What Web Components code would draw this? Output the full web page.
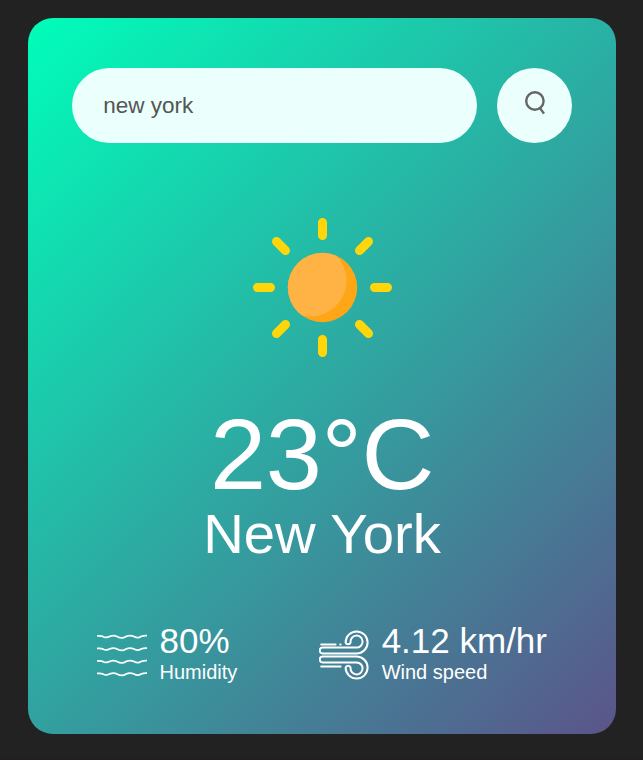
<!DOCTYPE html>
<html lang="en">
<head>
<meta charset="utf-8">
<title>Weather</title>
<style>
html{background:#222}
body{margin:0;height:760px;overflow:hidden;background:linear-gradient(#222 757px,#231e20 757px);font-family:"Liberation Sans",Arial,sans-serif;font-size:20px;color:#fff}
</style>
</head>
<body>
<weather-card>
  <search-bar slot="search" value="new york"></search-bar>
  <sun-icon></sun-icon>
  <span slot="temp">23°C</span>
  <span slot="city">New York</span>
  <weather-stat slot="stat" label="Humidity">
    <wave-icon slot="icon"></wave-icon>80%
  </weather-stat>
  <weather-stat slot="stat" label="Wind speed">
    <wind-icon slot="icon"></wind-icon>4.12 km/hr
  </weather-stat>
</weather-card>
<script>
function define(name, html) {
  customElements.define(name, class extends HTMLElement {
    constructor() {
      super();
      this.attachShadow({mode: "open"}).innerHTML = html;
    }
    connectedCallback() {
      for (const n of this.shadowRoot.querySelectorAll("[data-attr]")) {
        const v = this.getAttribute(n.dataset.attr) || "";
        if (n.tagName === "INPUT") n.value = v; else n.textContent = v;
      }
    }
  });
}

define("weather-card", `<style>
:host{display:block;box-sizing:border-box;width:588px;height:716px;margin:18px 0 0 28px;padding:50px 44px;border-radius:25px;background:linear-gradient(135deg,#00feba,#5b548a);text-align:center}
.icon{display:flex;justify-content:center;margin-top:38px;height:212px}
h1{margin:4px 0 0;font-size:101px;font-weight:500;line-height:115px;letter-spacing:-.4px}
h2{margin:-11px 0 0;font-size:56.25px;font-weight:500;line-height:65px}
.stats{display:flex;justify-content:space-between;padding:0 25px;margin-top:55px}
</style>
<slot name="search"></slot>
<div class="icon"><slot></slot></div>
<h1><slot name="temp"></slot></h1>
<h2><slot name="city"></slot></h2>
<div class="stats"><slot name="stat"></slot></div>`);

define("search-bar", `<style>
:host{display:flex;gap:20px}
input{flex:1;min-width:0;box-sizing:border-box;height:75px;padding:12.5px 31.25px;border:0;outline:0;border-radius:37.5px;background:#ebfffc;color:#555;font:22.5px "Liberation Sans",Arial,sans-serif}
button{width:75px;height:75px;padding:0;border:0;border-radius:50%;background:#ebfffc;display:flex;justify-content:center}
svg{width:24px;height:28px;margin-top:21px}
</style>
<input data-attr="value" spellcheck="false" aria-label="City">
<button aria-label="Search"><svg viewBox="0 0 24 28" fill="none" stroke="#666" stroke-width="2.4"><circle cx="11.9" cy="12" r="8.7"/><path d="M16.6 18.6L21 24.6"/></svg></button>`);

define("sun-icon", `<style>:host,svg{display:block;width:212px;height:212px}</style>
<svg viewBox="-106.5 -106.8 212 212"><g stroke="#ffd60a" stroke-width="9" stroke-linecap="round">
<path d="M0-65.3V-52.3M0 51.7V64.7M-65-.3H-52M52-.3H65M-46-46.3L-37-37.3M37-37.3L46-46.3M-46 45.7L-37 36.7M37 36.7L46 45.7"/></g>
<clipPath id="disc"><circle cy="-.3" r="34.7"/></clipPath>
<circle cy="-.3" r="34.7" fill="#ffa616"/>
<circle cx="-12" cy="-7.3" r="36" fill="#ffb344" clip-path="url(#disc)"/></svg>`);

define("weather-stat", `<style>
:host{display:flex;align-items:center;gap:12.5px;text-align:left}
::slotted(*){margin-top:4px}
.value{font-size:35px;line-height:40px}
.label{font-size:20px;line-height:23px}
</style>
<slot name="icon"></slot>
<div><div class="value"><slot></slot></div><div class="label" data-attr="label"></div></div>`);

const wave = y => `<path d="M.5 ${y-.6}Q4.5 ${y-.9} 7 ${y+.5}Q10 ${y+1.6} 12.5 ${y}Q16.5 ${y-1.9} 20 ${y}Q25 ${y+2.8} 29 ${y}Q33 ${y-1.9} 37 ${y}Q41 ${y+2.4} 44 ${y}Q46.5 ${y-1} 49.5 ${y-.9}"/>`;
define("wave-icon", `<style>:host,svg{display:block;width:50px;height:50px}</style>
<svg viewBox="0 0 50 50" fill="none" stroke="#fff" stroke-width="1.7" stroke-linecap="round">${[6.5,19,31.5,44].map(wave).join("")}</svg>`);

define("wind-icon", `<style>:host,svg{display:block;width:50px;height:50px}</style>
<svg viewBox=".4 0 50 50" fill="none" stroke="#fff" stroke-width="2" stroke-linecap="round" stroke-linejoin="round">
<path d="M2.6 14.4H17M21.6 14.4H22"/>
<path d="M38 23.4H4A2.9 2.9 0 0 1 4 17.6H38A6 6 0 1 0 32 12.4A2.6 2.6 0 0 1 27 12.4A11 11 0 1 1 38 23.4Z"/>
<path d="M2.6 36.4H22"/>
<path d="M38 26.6H4A2.9 2.9 0 0 0 4 32.4H38A6 6 0 1 1 32 37.6A2.6 2.6 0 0 0 27 37.6A11 11 0 1 0 38 26.6Z"/></svg>`);
</script>
</body>
</html>
